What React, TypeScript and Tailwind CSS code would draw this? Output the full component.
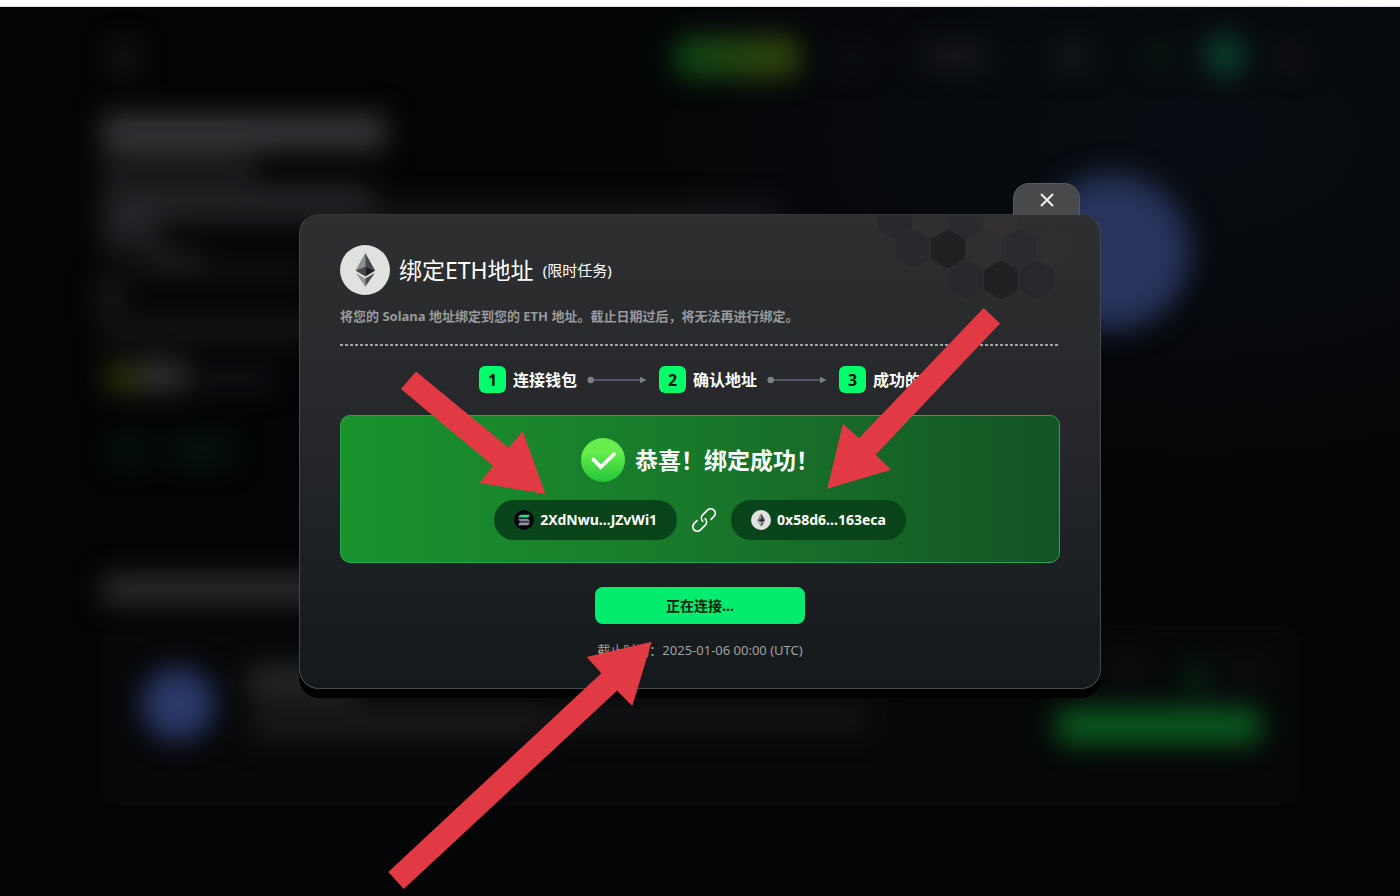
import React from "react";

const hexagons = [
  { x: 18, y: 4, fill: "#26282c" },
  { x: 53, y: 4, fill: "#303030" },
  { x: 89, y: 4, fill: "#292b2f" },
  { x: 124, y: 4, fill: "#333031" },
  { x: 36, y: 34, fill: "#27292d" },
  { x: 71, y: 34, fill: "#1e2021" },
  { x: 107, y: 34, fill: "#2e2f30" },
  { x: 142, y: 34, fill: "#292b2f" },
  { x: 177, y: 34, fill: "#302f30" },
  { x: 89, y: 65, fill: "#27292d" },
  { x: 124, y: 65, fill: "#1e2021" },
  { x: 160, y: 65, fill: "#26282c" },
];

function Honeycomb() {
  return (
    <svg
      className="pointer-events-none absolute top-0 right-[9px] h-[88px] w-[214px]"
      viewBox="0 0 214 88"
      aria-hidden="true"
    >
      {hexagons.map((h) => (
        <polygon
          key={`${h.x}-${h.y}`}
          points="0,-20 17.5,-10 17.5,10 0,20 -17.5,10 -17.5,-10"
          transform={`translate(${h.x} ${h.y})`}
          fill={h.fill}
          stroke="#2f3032"
          strokeWidth="0.6"
        />
      ))}
    </svg>
  );
}

function EthIcon({ className }: { className: string }) {
  return (
    <svg className={className} viewBox="0 0 50 50" aria-hidden="true">
      <circle cx="25" cy="25" r="25" fill="#dfe2de" />
      <polygon points="25.3,8 15.5,25.5 25.3,21.5" fill="#8b8f92" />
      <polygon points="25.3,8 35.2,25.5 25.3,21.5" fill="#45474b" />
      <polygon points="15.5,25.5 25.3,21.5 25.3,31.5" fill="#46484b" />
      <polygon points="35.2,25.5 25.3,21.5 25.3,31.5" fill="#1b1c20" />
      <polygon points="15.8,28 25.3,33.6 25.3,41.8" fill="#96999b" />
      <polygon points="34.8,28 25.3,33.6 25.3,41.8" fill="#4c4e52" />
    </svg>
  );
}

function SolanaIcon() {
  return (
    <svg className="size-5" viewBox="0 0 20 20" aria-hidden="true">
      <defs>
        <linearGradient id="sol" x1="0" y1="0" x2="1" y2="0">
          <stop offset="0.15" stopColor="#7f9a99" />
          <stop offset="0.45" stopColor="#19e987" />
        </linearGradient>
      </defs>
      <circle cx="10" cy="10" r="10" fill="#040509" />
      <path d="M5.8 4.8H16l-1.9 2.7H4z" fill="url(#sol)" />
      <path d="M4 8.7h10.1l1.9 2.7H5.8z" fill="#7d81a0" />
      <path d="M5.8 12.6H16l-1.9 2.7H4z" fill="#9496a2" />
    </svg>
  );
}

function CheckIcon() {
  return (
    <svg className="size-11" viewBox="0 0 44 44" aria-hidden="true">
      <defs>
        <linearGradient id="ok" x1="0" y1="0" x2="0" y2="1">
          <stop offset="0.3" stopColor="#67ee4c" />
          <stop offset="1" stopColor="#22c638" />
        </linearGradient>
      </defs>
      <circle cx="22" cy="22" r="22" fill="url(#ok)" />
      <path
        d="M12.5 21.5l7.2 7.6L33.2 16"
        fill="none"
        stroke="#fff"
        strokeWidth="3.8"
        strokeLinecap="round"
        strokeLinejoin="miter"
      />
    </svg>
  );
}

function ChainIcon() {
  return (
    <svg className="mx-[15px] size-6" viewBox="0 0 24 24" aria-hidden="true">
      <g
        transform="rotate(-45 12 12)"
        fill="none"
        stroke="#fff"
        strokeWidth="1.7"
        strokeLinecap="round"
      >
        <path d="M6.5 7.5H2.5a4.5 4.5 0 0 0 0 9H9.3a4.5 4.5 0 0 0 4.5-4.5" />
        <path d="M17.5 16.5h4a4.5 4.5 0 0 0 0-9H14.7a4.5 4.5 0 0 0-4.5 4.5" />
      </g>
    </svg>
  );
}

function StepArrow() {
  return (
    <svg className="mr-3 ml-2.5 h-2 w-[60px] shrink-0" viewBox="0 0 60 8" aria-hidden="true">
      <path d="M4 4h51" stroke="#686480" strokeWidth="1.3" />
      <circle cx="3.7" cy="4" r="3.3" fill="#7b8081" />
      <polygon points="53,0.8 59.6,4 53,7.2" fill="#7b8081" />
    </svg>
  );
}

function Backdrop() {
  return (
    <svg
      className="absolute inset-0 size-full"
      viewBox="0 0 1400 889"
      preserveAspectRatio="xMidYMin slice"
      aria-hidden="true"
    >
      <defs>
        <filter
          id="soft"
          x="-10%"
          y="-10%"
          width="120%"
          height="120%"
          colorInterpolationFilters="sRGB"
        >
          <feGaussianBlur stdDeviation="14" />
        </filter>
        <radialGradient id="glow">
          <stop offset="0" stopColor="#090d13" />
          <stop offset="1" stopColor="#030405" />
        </radialGradient>
        <linearGradient id="nav" x1="0" x2="1">
          <stop offset="0" stopColor="#0a4a16" />
          <stop offset="0.6" stopColor="#294810" />
          <stop offset="1" stopColor="#38480c" />
        </linearGradient>
      </defs>
      <rect width="1400" height="889" fill="#030405" />
      <ellipse cx="1200" cy="130" rx="640" ry="380" fill="url(#glow)" />
      <rect x="98" y="618" width="1204" height="180" rx="22" fill="#060708" />
      <g filter="url(#soft)">
        <circle cx="124" cy="50" r="15" fill="#1a1c20" />
        <rect x="674" y="30" width="126" height="40" rx="14" fill="url(#nav)" />
        <rect x="840" y="40" width="24" height="22" fill="#121418" />
        <rect x="920" y="36" width="70" height="26" fill="#17191c" />
        <rect x="1052" y="36" width="38" height="26" fill="#16181d" />
        <circle cx="1160" cy="48" r="14" fill="#0a1a10" />
        <circle cx="1225" cy="48" r="19" fill="#0b4a34" />
        <circle cx="1290" cy="50" r="12" fill="#1b191c" />
        <rect x="102" y="108" width="284" height="34" fill="#38393c" />
        <rect x="102" y="146" width="152" height="26" fill="#1c1d1f" />
        <rect x="102" y="178" width="270" height="36" fill="#242528" />
        <rect x="370" y="198" width="410" height="24" fill="#1a1b1e" />
        <rect x="102" y="214" width="58" height="28" fill="#222326" />
        <rect x="150" y="244" width="54" height="26" fill="#242528" />
        <rect x="102" y="256" width="210" height="16" fill="#141518" />
        <rect x="98" y="276" width="22" height="30" fill="#1f2022" />
        <rect x="102" y="312" width="210" height="20" fill="#1b1b1d" />
        <rect x="106" y="356" width="38" height="28" fill="#2f370b" />
        <rect x="138" y="354" width="48" height="30" fill="#333436" />
        <rect x="190" y="362" width="84" height="18" fill="#14161b" />
        <rect x="112" y="430" width="34" height="28" fill="#07150e" />
        <rect x="170" y="430" width="62" height="26" fill="#071710" />
        <rect x="102" y="569" width="320" height="27" fill="#303133" />
        <circle cx="178" cy="697" r="37" fill="#2b3969" />
        <rect x="248" y="660" width="110" height="28" fill="#2b2c2e" />
        <rect x="250" y="696" width="290" height="38" fill="#18181a" />
        <rect x="540" y="698" width="330" height="26" fill="#151619" />
        <circle cx="1112" cy="245" r="78" fill="#28345c" />
        <circle cx="1196" cy="670" r="14" fill="#082c17" />
        <rect x="1110" y="655" width="34" height="16" fill="#17161b" />
        <rect x="1230" y="658" width="34" height="16" fill="#141519" />
        <rect x="1056" y="702" width="206" height="34" rx="12" fill="#0b6021" />
      </g>
    </svg>
  );
}

function PointerArrows() {
  return (
    <svg
      className="pointer-events-none absolute top-0 left-1/2 z-20 h-[896px] w-[1400px] -translate-x-1/2"
      viewBox="0 0 1400 896"
      fill="#e23a45"
      aria-hidden="true"
    >
      <polygon points="416,371.5 508.7,447.7 522.7,431.3 545.5,494 479.7,483 493.3,466 401,389" />
      <polygon points="983.7,308 1000,323.5 875.7,454.7 891,469.7 827.3,488.7 843,423.7 859,438.3" />
      <polygon points="388.3,872 403.7,889 617,690.7 632.3,706 651.7,641.7 586.7,657 601.3,673.3" />
    </svg>
  );
}

function Step({ number, label }: { number: number; label: string }) {
  return (
    <li className="flex items-center gap-[7px]">
      <span className="flex size-[27px] items-center justify-center rounded-md bg-[#00ff6a] text-base font-bold text-[#06160c]">
        {number}
      </span>
      <span className="text-base font-bold whitespace-nowrap text-white">{label}</span>
    </li>
  );
}

function AddressPill({ icon, address }: { icon: React.ReactNode; address: string }) {
  return (
    <div className="flex h-10 items-center gap-1.5 rounded-full bg-[#09441a] px-5">
      {icon}
      <span className="text-sm font-bold text-white">{address}</span>
    </div>
  );
}

export default function App() {
  return (
    <div className="relative flex min-h-screen flex-col overflow-hidden bg-[#030405] font-['Noto_Sans','Noto_Sans_CJK_SC',sans-serif]">
      <div className="h-[7px] border-b border-[#dfe3e3] bg-white" />
      <main className="relative flex flex-1 items-center justify-center">
        <Backdrop />
        <section
          role="dialog"
          aria-labelledby="dialog-title"
          className="relative w-full max-w-[802px] rounded-[20px] border border-[#48484a] border-t-[#363738] bg-linear-to-b from-[#2e2f30] via-[#24262a] to-[#14191c] px-10 pt-[30px] pb-7 shadow-[0_9px_0_#010102]"
        >
          <button
            type="button"
            aria-label="关闭"
            className="absolute right-5 bottom-full flex h-8 w-[67px] items-center justify-center rounded-t-[16px] border border-b-0 border-[#5a5b5d] bg-[#48494b]"
          >
            <svg className="size-3.5" viewBox="0 0 14 14" aria-hidden="true">
              <path d="M1 1l12 12M13 1L1 13" stroke="#f4f5f5" strokeWidth="1.9" />
            </svg>
          </button>
          <Honeycomb />
          <header className="relative flex items-center gap-[9px]">
            <EthIcon className="size-[50px]" />
            <h1 id="dialog-title" className="text-[23px] leading-8 whitespace-nowrap text-white">
              绑定ETH地址
            </h1>
            <span className="text-[15px] whitespace-nowrap text-white">(限时任务)</span>
          </header>
          <p className="relative mt-[11px] text-[13px] leading-5 font-bold text-[#989a9c]">
            将您的 Solana 地址绑定到您的 ETH 地址。截止日期过后，将无法再进行绑定。
          </p>
          <div className="mt-[18px] h-0.5 bg-[repeating-linear-gradient(90deg,#a3a5a7_0_3px,transparent_3px_5px)]" />
          <ol className="mt-5 flex items-center justify-center">
            <Step number={1} label="连接钱包" />
            <li aria-hidden="true">
              <StepArrow />
            </li>
            <Step number={2} label="确认地址" />
            <li aria-hidden="true">
              <StepArrow />
            </li>
            <Step number={3} label="成功的" />
          </ol>
          <div className="mt-[22px] flex flex-col items-center gap-[18px] rounded-[10px] border border-[#2fa44d] bg-linear-to-r from-[#1a932d] via-[#18782a] to-[#145425] py-[22px]">
            <div className="flex items-center gap-2.5">
              <CheckIcon />
              <h2 className="text-[23px] leading-8 font-bold whitespace-nowrap text-white">
                恭喜！绑定成功！
              </h2>
            </div>
            <div className="flex items-center">
              <AddressPill icon={<SolanaIcon />} address="2XdNwu...JZvWi1" />
              <ChainIcon />
              <AddressPill icon={<EthIcon className="size-5" />} address="0x58d6...163eca" />
            </div>
          </div>
          <div className="mt-6 flex flex-col items-center gap-4">
            <button
              type="button"
              className="h-[37px] w-[210px] rounded-lg bg-[#04ec6d] text-sm font-bold text-[#04210f]"
            >
              正在连接...
            </button>
            <p className="text-[13px] leading-5 whitespace-nowrap text-[#a0a2a4]">
              截止时间：2025-01-06 00:00 (UTC)
            </p>
          </div>
        </section>
      </main>
      <PointerArrows />
    </div>
  );
}
